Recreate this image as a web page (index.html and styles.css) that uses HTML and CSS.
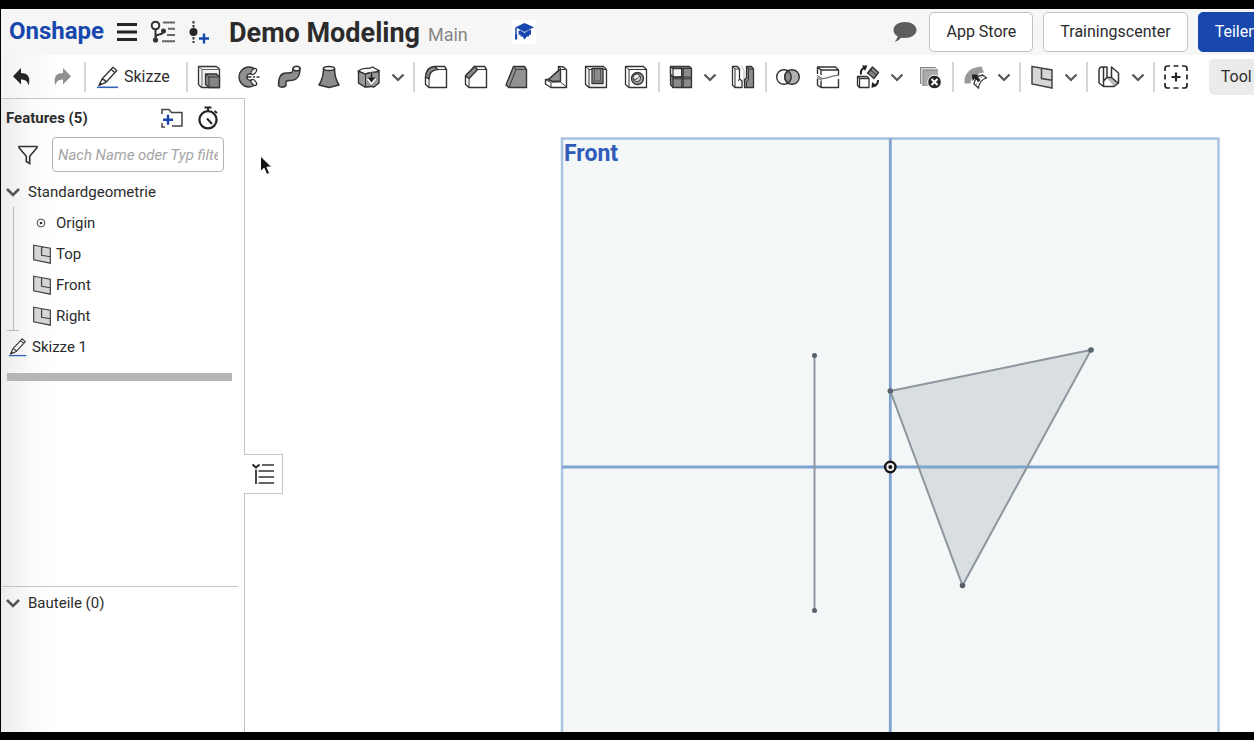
FILE: index.html
```html
<!DOCTYPE html>
<html lang="de">
<head>
<meta charset="utf-8">
<title>Demo Modeling – Onshape</title>
<link rel="stylesheet" href="styles.css">
</head>
<body>
<svg class="defs" aria-hidden="true">
  <symbol id="chev" viewBox="0 0 18 24"><path d="M3.500 9.500l5.500 5.500 5.500-5.500" fill="none" stroke="#555" stroke-width="2.200"/></symbol>
  <symbol id="pencil" viewBox="0 0 24 24"><path d="M3 20.500l3-6.500L17 2.200l3.800 3.300L10 17.300z M6 14c2 .3 3.300 1.300 4 3.300 M15 4.300l3.900 3.400" fill="none" stroke="#333" stroke-width="1.300" stroke-linejoin="round"/><path d="M2.500 21l1.500-4 2.500 2z" fill="#333"/><path d="M1 22.300h21" stroke="#3263b8" stroke-width="1.600"/></symbol>
  <symbol id="plane" viewBox="0 0 24 24"><path d="M2 1.500l20 3.500v18L2 19z" fill="#d6d6d6"/><path d="M2 1.500l20 3.500v18L2 19z M11.500 3.200v10.300l10.500 1.800" fill="none" stroke="#444" stroke-width="1.500"/></symbol>
</svg>
<div class="app">
  <header class="header">
    <a class="logo" href="#">Onshape</a>
    <button class="plain menu" aria-label="Menü"><svg viewBox="0 0 20 20"><path d="M0 2.500h20M0 10h20M0 17.500h20" stroke="#252525" stroke-width="3"/></svg></button>
    <button class="plain tree" aria-label="Versionen"><svg viewBox="0 0 26 24"><g fill="none" stroke="#333" stroke-width="2"><circle cx="5.500" cy="5.500" r="3.800"/><path d="M5.500 9.500v10M5.500 17.500c0-5 7.500-1 7.500-6"/></g><circle cx="5.500" cy="20" r="2.600" fill="#333"/><circle cx="13.500" cy="11" r="2.500" fill="#333"/><path d="M13 2.500h12M18 8.800h7M17 15h8M12 21.300h13" stroke="#666" stroke-width="2"/></svg></button>
    <button class="plain addver" aria-label="Version erstellen"><svg viewBox="0 0 22 24"><path d="M5.500 1v22" stroke="#333" stroke-width="2" stroke-dasharray="2.500 1.500"/><circle cx="5.500" cy="12" r="4" fill="#252525"/><path d="M11 18.500h10M16 13.500v10" stroke="#1848ae" stroke-width="2.400"/></svg></button>
    <h1 class="title">Demo Modeling</h1>
    <span class="branch">Main</span>
    <button class="learn" aria-label="Lernen"><svg viewBox="0 0 24 24"><path d="M12.500 3l9.500 4.300-9.500 4.700-9-4.700z" fill="#1848ae"/><path d="M4 7.500v8" stroke="#1848ae" stroke-width="1.500"/><path d="M3 14.500h2.200v5H3zM6.500 11l2-.8 4 2.800 4-2.800 2.500-.5v5h-2v1.800h-2l-2.500 3-2-3H8.500v-1.800h-2z" fill="#1848ae"/></svg></button>
    <button class="plain chat" aria-label="Kommentare"><svg viewBox="0 0 24 20"><path d="M12 0C5.500 0 .5 3.400.5 8c0 2.800 1.700 5 4.200 6.300C4.300 16.500 3 18.500 1.500 20c3-.8 5-2.400 6.500-4.300C16.500 17 23.500 13.500 23.500 8 23.500 3.400 18.500 0 12 0z" fill="#5d5d5d"/></svg></button>
    <button class="btn">App Store</button>
    <button class="btn">Trainingscenter</button>
    <button class="btn primary">Teilen</button>
  </header>

  <nav class="toolbar" aria-label="Werkzeuge">
    <button class="tool" aria-label="Rückgängig"><svg viewBox="0 0 24 24"><path d="M11 3v5c7 0 10 4.500 7.500 12.500-.8-4-3-6-7.500-6v5L3 11.300z" fill="#252525"/></svg></button>
    <button class="tool" aria-label="Wiederholen"><svg viewBox="0 0 24 24"><path d="M13 3v5c-7 0-10 4.500-7.500 12.500.8-4 3-6 7.500-6v5l8-8.200z" fill="#909090"/></svg></button>
    <span class="sep"></span>
    <button class="sketch"><svg class="ic"><use href="#pencil"/></svg>Skizze</button>
    <span class="sep"></span>
    <button class="tool" aria-label="Extrudieren"><svg viewBox="0 0 24 24"><g stroke="#333" stroke-width="1.300" stroke-linejoin="round"><path d="M1.500 1.500h18l3 2.500v18.500H4.500l-3-3z" fill="#f2f2f0"/><path d="M1.500 1.500L5 4.500h17.500M5 4.500v18" fill="none" stroke="#666" stroke-width="1"/><path d="M8.500 9h11l3 3v10.500H12l-3.500-3z" fill="#858585"/><path d="M8.500 9l3.500 3h10.500M12 12v10.500" fill="none" stroke-width="1"/></g></svg></button>
    <button class="tool" aria-label="Drehen"><svg viewBox="0 0 24 24"><path d="M18 4A10 10 0 1 0 18 20L14.500 15a3.300 3.300 0 1 1 0-6z" fill="#909090" stroke="#333" stroke-width="1.400"/><g fill="#f5f5f5" stroke="#333" stroke-width="1.300"><ellipse cx="16.800" cy="6.500" rx="3.500" ry="2" transform="rotate(-48 16.800 6.500)"/><ellipse cx="16.800" cy="17.500" rx="3.500" ry="2" transform="rotate(48 16.800 17.500)"/></g><path d="M9.500 12h13" stroke="#333" stroke-width="1.500" stroke-dasharray="5 1.500 2 1.500"/></svg></button>
    <button class="tool" aria-label="Austragen"><svg viewBox="0 0 24 24"><path d="M16 3.500c0 5-1.500 4.500-7 4.500-5 0-7.500 4-7.500 12.500 1 2.200 6 2.200 7.500 0 0-4-.5-5 3.500-5C20 15.500 23 12 23 3.500z" fill="#8c8c8c" stroke="#333" stroke-width="1.500" stroke-linejoin="round"/><ellipse cx="19.500" cy="3.600" rx="3.500" ry="2.300" fill="#f5f5f5" stroke="#333" stroke-width="1.500"/></svg></button>
    <button class="tool" aria-label="Ausformung"><svg viewBox="0 0 24 24"><path d="M6.500 3.500C6.500 11 4.500 16 2 20l10 2.500L22 20c-2.500-4-4.500-9-4.500-16.500z" fill="#8c8c8c" stroke="#333" stroke-width="1.500" stroke-linejoin="round"/><ellipse cx="12" cy="3.500" rx="5.500" ry="2" fill="#f5f5f5" stroke="#333" stroke-width="1.500"/></svg></button>
    <button class="tool" aria-label="Verdicken"><svg viewBox="0 0 24 24"><path d="M1.500 6l7 3c5-2 9-1 13.500-3v12l-5 4c-3-1.500-5.500.5-9 0l-6.500-4z" fill="#999" stroke="#333" stroke-width="1.400"/><path d="M1.500 6c5-5 9-.5 14-4l6.500 3.500c-5 3-9 1-13.500 3.500z" fill="#f7f7f7" stroke="#333" stroke-width="1.300"/><path d="M8.500 9v13" stroke="#333"/><path d="M14.500 7v11M11 13.500l3.500 4 3.500-4" fill="none" stroke="#fff" stroke-width="3"/><path d="M14.500 7v7" stroke="#222" stroke-width="2.200"/><path d="M10.500 12.500h8l-4 5z" fill="#222"/></svg></button>
    <button class="drop" aria-label="Mehr"><svg><use href="#chev"/></svg></button>
    <span class="sep"></span>
    <button class="tool" aria-label="Verrunden"><svg viewBox="0 0 24 24"><g stroke="#333" stroke-width="1.400" stroke-linejoin="round"><path d="M1.500 12C2 5 5 2 11 1.500h9.500l2 3v18H5l-3.500-3z" fill="#fff"/><path d="M1.500 12C2 5 5 2 11 1.500L13.500 4.500C8 5 5 8 5 14z" fill="#8c8c8c"/><path d="M13.500 4.500h9M5 14v8.500" fill="none" stroke-width="1"/></g></svg></button>
    <button class="tool" aria-label="Fase"><svg viewBox="0 0 24 24"><g stroke="#333" stroke-width="1.400" stroke-linejoin="round"><path d="M1.500 11l9-9.500h10l2 3v18H5l-3.500-3z" fill="#fff"/><path d="M1.500 11l9-9.500 3 3-8.500 9z" fill="#8c8c8c"/><path d="M13.500 4.500h9M5 13.500v9" fill="none" stroke-width="1"/></g></svg></button>
    <button class="tool" aria-label="Formschräge"><svg viewBox="0 0 24 24"><path d="M2 20L9.500 1.500h11l2 3v18H5z" fill="#929292" stroke="#333" stroke-width="1.400"/><path d="M9.500 1.500l2.500 3h10.500M12 4.500l-7 18" fill="none" stroke="#444" stroke-width="1.100"/></svg></button>
    <button class="tool" aria-label="Rippe"><svg viewBox="0 0 24 24"><g stroke="#333" stroke-width="1.400" stroke-linejoin="round"><path d="M14.500 1.500l5 .5 3 3v17.500H7L1.500 19v-4.500h3l10-9z" fill="#fff"/><path d="M4.500 14.500L16.500 4v12l-8 .5z" fill="#909090"/><path d="M16.500 4v13h-9M1.500 14.500l5.500 3v5M14.500 1.500l3 3h5M16.500 17l6 5" fill="none" stroke-width="1"/></g></svg></button>
    <button class="tool" aria-label="Wandstärke"><svg viewBox="0 0 24 24"><g stroke="#333" stroke-width="1.300" stroke-linejoin="round"><path d="M1.500 1.500h18l3 3v18H5l-3.500-3z" fill="#f7f7f7"/><path d="M1.500 1.500L5 4.500h17.500M5 4.500v18" fill="none" stroke-width="1"/><path d="M8 3.500h11v15H8z" fill="#8c8c8c"/><path d="M10.500 4v12h6V4M8 18.500l2.500-2.500M19 18.500L16.500 16" fill="none" stroke="#555" stroke-width="1"/></g></svg></button>
    <button class="tool" aria-label="Bohrung"><svg viewBox="0 0 24 24"><g stroke="#333" stroke-width="1.300" stroke-linejoin="round"><path d="M1.500 1.500h18l3 3v18H5l-3.500-3z" fill="#fff"/><path d="M1.500 1.500L5 4.500h17.500M5 4.500v18" fill="none" stroke-width="1"/><circle cx="13.500" cy="13.500" r="6" fill="#a0a0a0"/><circle cx="12.800" cy="12.800" r="3.800" fill="#e8e8e8" stroke-width="1"/><path d="M10 14c3 1 5-1 5.500-3.500" fill="none" stroke-width="1"/></g></svg></button>
    <span class="sep"></span>
    <button class="tool" aria-label="Muster"><svg viewBox="0 0 24 24"><g stroke="#333" stroke-width="1.300" stroke-linejoin="round"><path d="M1.500 1.500h19l2 2v19H4l-2.500-3z" fill="#8a8a8a"/><path d="M4 3.500h8.800V12H4L1.500 9.500v-8z" fill="#f5f5f5"/><path d="M1.500 1.500l2.500 2h19M4 3.500v19M1.500 9.500L4 12h19M12.800 3.500v19" fill="none" stroke-width="1.200"/><path d="M14.300 3.500v19M4 13.800h18.500" fill="none" stroke-width="1"/></g></svg></button>
    <button class="drop" aria-label="Mehr"><svg><use href="#chev"/></svg></button>
    <button class="tool" aria-label="Spiegeln"><svg viewBox="0 0 24 24"><path d="M10 1l3 4v12" fill="none" stroke="#bbb"/><g stroke="#333" stroke-width="1.300" stroke-linejoin="round"><path d="M1.500 1.500H6.500l2 2.500v10l2.500 2v6.500H4l-2.500-2.500z" fill="#fff"/><path d="M1.500 1.500L4 4h4.500M4 4v18.500M8.500 14l-1.500 2" fill="none" stroke-width="1"/><path d="M22.500 4l-2-2.500h-5V13l-2 1.500V22.500h9z" fill="#8c8c8c"/><path d="M15.500 1.500l2 2.500h5M17.500 4v11l-2 1.500v6" fill="none" stroke-width="1"/></g></svg></button>
    <span class="sep"></span>
    <button class="tool" aria-label="Boolesch"><svg viewBox="0 0 24 24"><g stroke="#333" stroke-width="1.400"><circle cx="8" cy="12" r="7.300" fill="#fff"/><circle cx="16" cy="12" r="7.300" fill="#b0b0b0"/><path d="M12 6a7.300 7.300 0 0 1 0 12 7.300 7.300 0 0 1 0-12z" fill="#8c8c8c"/></g></svg></button>
    <button class="tool" aria-label="Teilen"><svg viewBox="0 0 24 24"><g fill="none" stroke="#333" stroke-width="1.400" stroke-linejoin="round"><path d="M1.500 9V2h18l3 3v5M1.500 2L5 5h17.500M5 5v5M1.500 14v6L5 22.500h17.500V14M5 16v6.500"/><path d="M1 10.500l5 3c6 1 9-4 17-3M1 12.500l5 3" stroke="#777"/></g></svg></button>
    <button class="tool" aria-label="Transformieren"><svg viewBox="0 0 24 24"><g stroke="#333" stroke-width="1.300" stroke-linejoin="round"><path d="M1.500 11.500h9.500l2 2v9H3.500l-2-2z" fill="#fff"/><path d="M1.500 11.500l2 2H13M3.500 13.500v9" fill="none"/><path d="M16.500 2l6 5.500-4.500 6-6.500-5.500z" fill="#858585"/><path d="M16.500 2l-1.500 3.500-3.500 2.500M15 5.500l5.500 5" fill="none" stroke-width="1"/></g><path d="M5 9.500C4.500 6 5.500 4 8 3" fill="none" stroke="#222" stroke-width="2"/><path d="M6 .5h5.500L9 6zM15.500 23l.5-6 5 4z" fill="#222"/><path d="M22 15c0 3-1 5-4 5.500" fill="none" stroke="#222" stroke-width="2"/></svg></button>
    <button class="drop" aria-label="Mehr"><svg><use href="#chev"/></svg></button>
    <button class="tool" aria-label="Teil löschen"><svg viewBox="0 0 24 24"><path d="M2 2h15l3 3v16H5l-3-3z" fill="#aaa"/><path d="M2.500 19V2.500h15M5 21V5.200h15" fill="none" stroke="#888"/><path d="M3.800 20V3.800h15" fill="none" stroke="#e6e6e6"/><circle cx="16.500" cy="17" r="6.800" fill="#262626" stroke="#fff"/><path d="M13.500 14l6 6M19.500 14l-6 6" stroke="#fff" stroke-width="2"/></svg></button>
    <span class="sep"></span>
    <button class="tool" aria-label="Fläche verschieben"><svg viewBox="0 0 24 24"><path d="M1.500 18.500C.5 8 8 2 18.500 1.500l2.500 6C14 8 8 12 7.500 18.500z" fill="#999"/><path d="M11 19c.5-5 3.500-8 8.500-9l4 3c-5 1.500-7.500 5-8 10z" fill="#fff" stroke="#333" stroke-width="1.300"/><path d="M13.500 20.500c.5-5 3-8 8-9.500" fill="none" stroke="#999" stroke-dasharray="2 1"/><path d="M9 9.500h7l-2 2 3.500 3.500-2 2-3.500-3.500-2.500 2.500z" fill="#222"/></svg></button>
    <button class="drop" aria-label="Mehr"><svg><use href="#chev"/></svg></button>
    <span class="sep"></span>
    <button class="tool" aria-label="Ebene"><svg><use href="#plane"/></svg></button>
    <button class="drop" aria-label="Mehr"><svg><use href="#chev"/></svg></button>
    <span class="sep"></span>
    <button class="tool" aria-label="Blech"><svg viewBox="0 0 24 24"><path d="M9.500 12.500h5l6.500 6-4 3z" fill="#bbb"/><g fill="none" stroke="#333" stroke-width="1.500" stroke-linejoin="round"><path d="M2 18V5.500Q2 2 5 2h5v10.500L6.500 16M2 18l4.500 3.500h10.500L21.500 18V8L14.500 2v10.500l7 6M10 12.500h4.500M5.500 2.500Q7 2.500 6.500 5v16"/></g></svg></button>
    <button class="drop" aria-label="Mehr"><svg><use href="#chev"/></svg></button>
    <span class="sep"></span>
    <button class="tool" aria-label="Hinzufügen"><svg viewBox="0 0 24 24"><g fill="none" stroke="#252525" stroke-width="1.700"><path d="M1 6V3.500Q1 1 3.500 1H6M18 1h2.500Q23 1 23 3.500V6M23 18v2.500q0 2.500-2.500 2.500H18M6 23H3.500Q1 23 1 20.500V18M9.500 1h5M9.500 23h5M1 9.500v5M23 9.500v5"/><path d="M7.500 12h9M12 7.500v9" stroke-width="2.200"/></g></svg></button>
    <button class="search">Tool</button>
  </nav>

  <main class="work">
    <aside class="side">
      <section class="features">
        <div class="head">
          <h2>Features (5)</h2>
          <button class="plain" aria-label="Ordner hinzufügen"><svg class="ic" viewBox="0 0 24 24"><path d="M2 8V3.500h7l2.500 3H22V20H12M2 17v4h3" fill="none" stroke="#444" stroke-width="1.500"/><path d="M3 13.800h10M8 8.800v10" stroke="#1848ae" stroke-width="2.400"/></svg></button>
          <button class="plain" aria-label="Neuaufbauzeiten"><svg class="ic" viewBox="0 0 24 24"><circle cx="12" cy="13.800" r="8.600" fill="none" stroke="#252525" stroke-width="2.300"/><path d="M8.500 1.500h7M12 1.500v4M18.500 5l2.500 2" stroke="#252525" stroke-width="2"/><path d="M11 12.500l5 5.500" stroke="#252525" stroke-width="2"/></svg></button>
        </div>
        <div class="filter">
          <button class="plain" aria-label="Filter"><svg class="ic" viewBox="0 0 24 24"><path d="M3 3.500h18v1.200l-7.300 8.600V20.500l-3.400-2v-5.200L3 4.700z" fill="none" stroke="#333" stroke-width="1.600"/></svg></button>
          <input type="text" aria-label="Features filtern" placeholder="Nach Name oder Typ filtern">
        </div>
        <button class="row group"><svg class="arrow" viewBox="0 0 16 16"><path d="M2 5l6 6 6-6" fill="none" stroke="#555" stroke-width="2.600"/></svg>Standardgeometrie</button>
        <ul class="children">
          <li class="row"><svg class="small" viewBox="0 0 20 20"><circle cx="9" cy="10" r="3.900" fill="none" stroke="#444"/><circle cx="9" cy="10" r="1.300" fill="#333"/></svg>Origin</li>
          <li class="row"><svg class="small"><use href="#plane"/></svg>Top</li>
          <li class="row"><svg class="small"><use href="#plane"/></svg>Front</li>
          <li class="row"><svg class="small"><use href="#plane"/></svg>Right</li>
        </ul>
        <div class="row item"><svg class="small"><use href="#pencil"/></svg>Skizze 1</div>
        <div class="rollback"></div>
      </section>
      <section class="parts">
        <button class="row group"><svg class="arrow" viewBox="0 0 16 16"><path d="M2 5l6 6 6-6" fill="none" stroke="#555" stroke-width="2.600"/></svg>Bauteile (0)</button>
      </section>
      <button class="tab" aria-label="Featureliste"><svg viewBox="0 0 24 24"><path d="M1.500 2.500l3.500 3 3.500-3" fill="none" stroke="#222" stroke-width="1.900"/><path d="M5 7.500V22" stroke="#333" stroke-width="1.800"/><path d="M11 3h12M7.500 9h15.500M7.500 15h15.500M7.500 21h15.500" stroke="#333" stroke-width="1.600"/></svg></button>
    </aside>
    <svg class="canvas" viewBox="245 98 1009 634" preserveAspectRatio="xMinYMin slice" role="img" aria-label="Front">
      <path d="M562 138.500H1218.500V800H562z" fill="#f3f7f8" stroke="#a9c3e0" stroke-width="2.500"/>
      <path d="M890.300 391L1091 350 962.500 585.500z" fill="#d9dee1"/>
      <path d="M562 467H1218.500M890.300 138.500V800" stroke="#7ea3d0" stroke-width="2.800"/>
      <path d="M890.300 391L1091 350 962.500 585.500zM814.500 355.500V610.500" fill="none" stroke="#8d969e" stroke-width="2"/>
      <g fill="#56616a"><circle cx="890.300" cy="391" r="2.800"/><circle cx="1091" cy="350" r="2.800"/><circle cx="962.500" cy="585.500" r="2.800"/><circle cx="814.500" cy="355.500" r="2.500"/><circle cx="814.500" cy="610.500" r="2.500"/></g>
      <circle cx="890.300" cy="467" r="5.200" fill="#eee" stroke="#151515" stroke-width="2.400"/><circle cx="890.300" cy="467" r="2" fill="#151515"/>
      <text class="planename" x="564" y="161">Front</text>
      <path d="M260.500 156v15.500l3.600-3.300 2.700 6.300 2.800-1.200-2.700-6.200h4.800z" fill="#111" stroke="#fff"/>
    </svg>
  </main>
</div>
</body>
</html>
```
FILE: styles.css
```css
* { box-sizing: border-box; }
body { margin: 0; background: #000; color: #2b2b2b; font: 16px/20px Roboto, "Liberation Sans", sans-serif; }
button { font: inherit; color: inherit; margin: 0; padding: 0; border: 0; background: none; flex-shrink: 0; white-space: nowrap; }
svg { display: block; flex-shrink: 0; }
.defs { position: absolute; width: 0; height: 0; }
.app { display: flex; flex-direction: column; height: 100vh; padding: 9px 0 8px 1px; overflow: hidden; }

.header { display: flex; align-items: center; height: 46px; padding-left: 8px; background: #f6f6f6; overflow: hidden; flex-shrink: 0; }
.logo { color: #1848ae; font-size: 24px; line-height: 24px; font-weight: 700; text-decoration: none; width: 108px; padding-bottom: 2px; flex-shrink: 0; }
.menu svg { width: 20px; height: 20px; }
.tree { margin-left: 13px; }
.tree svg { width: 26px; height: 24px; }
.addver { margin-left: 12px; }
.addver svg { width: 22px; height: 24px; }
.title { margin: 0 0 0 19px; padding-top: 2px; font-size: 27px; line-height: 44px; font-weight: 700; white-space: nowrap; }
.branch { margin: 6px 0 0 8px; font-size: 18px; color: #858585; }
.learn { margin-left: 44px; border-radius: 3px; background: #fff; }
.learn svg { width: 24px; height: 24px; }
.chat { margin-left: auto; margin-right: 12px; }
.chat svg { width: 24px; height: 20px; }
.btn { height: 40px; padding: 0 16px; margin-right: 10px; border: 1px solid #c2c2c2; border-radius: 5px; background: #fff; }
.primary { margin-right: -20px; background: #1848ae; border-color: #1848ae; color: #fff; }

.toolbar { display: flex; align-items: center; height: 43px; padding-left: 1px; background: linear-gradient(90deg, #f3f3f4, #fff 60px); overflow: hidden; flex-shrink: 0; }
.tool { display: flex; justify-content: center; width: 40px; height: 40px; align-items: center; }
.tool svg, .ic { width: 24px; height: 24px; }
.drop { width: 18px; margin-right: 4px; }
.drop svg { width: 18px; height: 24px; }
.sep { width: 2px; height: 30px; margin: 0 1px 0 2px; background: #d6d6d6; flex-shrink: 0; }
.sketch { display: flex; align-items: center; gap: 4px; padding: 0 14px 0 9px; }
.search { flex: 1 0 auto; margin-left: 13px; height: 36px; padding-left: 12px; border-radius: 5px 0 0 5px; background: #ebebeb; text-align: left; }

.work { display: flex; flex: 1; min-height: 0; background: #fff; }
.side { position: relative; display: flex; flex-direction: column; width: 244px; flex-shrink: 0; border: solid #c4c4c4; border-width: 1px 1px 0 0; background: linear-gradient(90deg, #ececed, #fafafa 30px, #fff 54px); font-size: 15px; }
.features { flex: 1; min-height: 0; overflow: hidden; }
.plain { display: flex; align-items: center; }
.head { display: flex; align-items: center; gap: 12px; height: 38px; padding: 0 24px 0 5px; }
.head h2 { flex: 1; margin: 0; font-size: 15px; font-weight: 700; }
.filter { display: flex; align-items: center; gap: 12px; padding: 0 20px 0 15px; margin-bottom: 4px; }
.filter input { flex: 1; min-width: 0; height: 35px; padding: 0 5px; border: 1px solid #b5b5b5; border-radius: 4px; background: #fff; font: inherit; font-style: italic; }
.filter input::placeholder { color: #a5a5a5; opacity: 1; }
.row { display: flex; align-items: center; height: 31px; }
.group { gap: 7px; padding-left: 4px; width: 100%; }
.arrow { width: 16px; height: 16px; }
.children { position: relative; list-style: none; margin: 0; padding: 0 0 0 31px; }
.children::before { content: ""; position: absolute; left: 12px; top: 0; bottom: 0; width: 1px; background: #b8b8b8; }
.children::after { content: ""; position: absolute; left: 6px; bottom: 0; width: 12px; height: 1px; background: #b8b8b8; }
.children .row { gap: 4px; }
.small { width: 20px; height: 20px; }
.item { gap: 4px; padding-left: 7px; }
.rollback { height: 8px; margin: 11px 12px 0 6px; background: #b5b5b5; }
.parts { height: 146px; margin-right: 6px; border-top: 1px solid #c4c4c4; flex-shrink: 0; }
.tab { position: absolute; left: 243px; top: 56%; margin-top: 1px; display: flex; align-items: center; justify-content: center; width: 39px; height: 40px; border: 1px solid #c4c4c4; border-left: 0; background: #fff; }
.tab svg { width: 24px; height: 24px; }
.canvas { flex: 1; min-width: 0; height: 100%; }
.planename { font: 700 23px Roboto, "Liberation Sans", sans-serif; fill: #2f5cb8; }
```
